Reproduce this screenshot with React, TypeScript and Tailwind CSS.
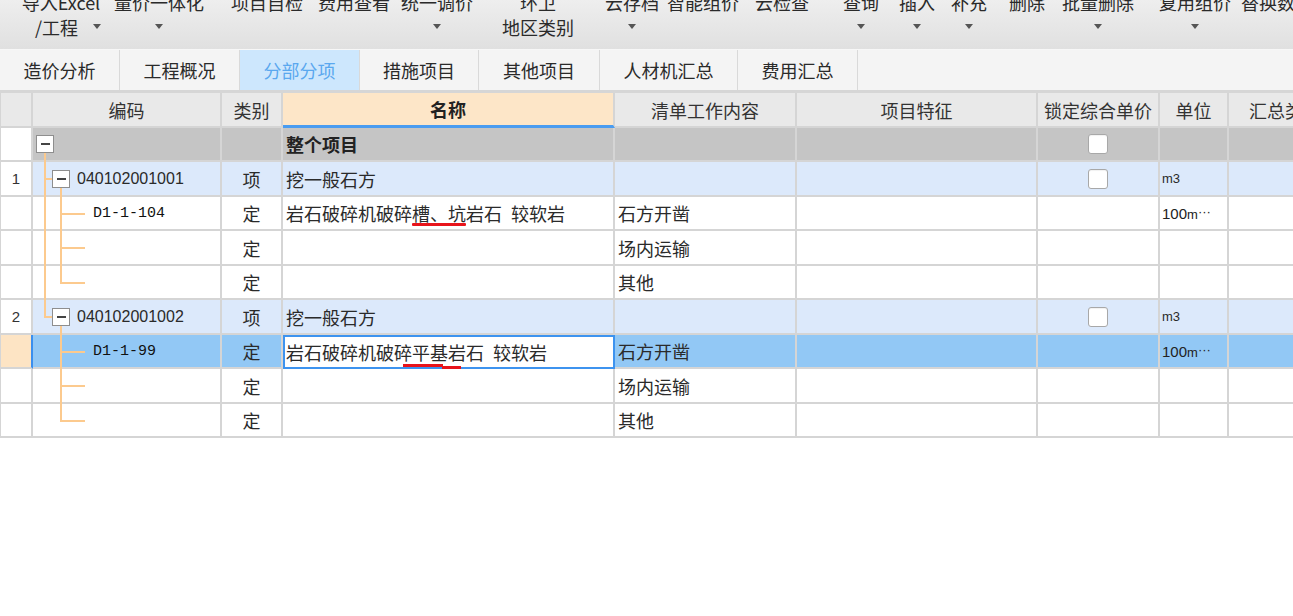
import React from "react";

const Arrow = () => (
  <span className="inline-block h-0 w-0 border-x-[4px] border-t-[5px] border-x-transparent border-t-[#555]" />
);

type TB = { l1: string; l2?: React.ReactNode; cls: string };

const toolbar: TB[] = [
  {
    l1: "导入Excel",
    l2: (
      <span className="flex w-full items-center pl-[14px]">
        <span>/工程</span>
        <span className="ml-[15px] flex">
          <Arrow />
        </span>
      </span>
    ),
    cls: "ml-[21px] w-[80px]",
  },
  { l1: "量价一体化", l2: <Arrow />, cls: "ml-[13px] w-[90px]" },
  { l1: "项目自检", cls: "ml-[27px] w-[72px]" },
  { l1: "费用查看", cls: "ml-[15px] w-[72px]" },
  { l1: "统一调价", l2: <Arrow />, cls: "ml-[11px] w-[72px]" },
  { l1: "环卫", l2: "地区类别", cls: "ml-[29px] w-[72px]" },
  { l1: "云存档", l2: <Arrow />, cls: "ml-[31px] w-[54px]" },
  { l1: "智能组价", cls: "ml-[8px] w-[72px]" },
  { l1: "云检查", cls: "ml-[16px] w-[54px]" },
  { l1: "查询", l2: <Arrow />, cls: "ml-[34px] w-[36px]" },
  { l1: "插入", l2: <Arrow />, cls: "ml-[20px] w-[36px]" },
  { l1: "补充", l2: <Arrow />, cls: "ml-[16px] w-[36px]" },
  { l1: "删除", cls: "ml-[22px] w-[36px]" },
  { l1: "批量删除", l2: <Arrow />, cls: "ml-[17px] w-[72px]" },
  { l1: "复用组价", l2: <Arrow />, cls: "ml-[25px] w-[72px]" },
  { l1: "替换数据", cls: "ml-[10px] w-[72px]" },
];

const tabs: { t: string; w: string; active?: boolean }[] = [
  { t: "造价分析", w: "w-[120px]" },
  { t: "工程概况", w: "w-[120px]" },
  { t: "分部分项", w: "w-[120px]", active: true },
  { t: "措施项目", w: "w-[119px]" },
  { t: "其他项目", w: "w-[121px]" },
  { t: "人材机汇总", w: "w-[138px]" },
  { t: "费用汇总", w: "w-[120px]" },
];

const W = [
  "w-[32px]",
  "w-[189px]",
  "w-[61px]",
  "w-[332px]",
  "w-[182px]",
  "w-[241px]",
  "w-[122px]",
  "w-[69px]",
  "w-[114px]",
];

const CELL =
  "relative shrink-0 h-full border-r-2 border-b-2 border-[#d5d5d5] flex items-center overflow-visible ";

const LINE = "absolute bg-[#fcca8e] ";

const Box = ({ cls }: { cls: string }) => (
  <span
    className={
      "absolute z-10 flex h-[18px] w-[18px] items-center justify-center border border-[#8e8e8e] bg-white " +
      cls
    }
  >
    <span className="h-[2px] w-[9px] bg-[#444]" />
  </span>
);

const Check = () => (
  <span className="block h-[20px] w-[20px] rounded-[3px] border border-[#a8a8a8] bg-white shadow-[inset_0_1px_1px_rgba(0,0,0,0.06)]" />
);

type Row = {
  kind: "root" | "qd" | "de";
  h: string;
  num?: string;
  code?: string;
  type?: string;
  name?: React.ReactNode;
  content?: string;
  unit?: React.ReactNode;
  lastQd?: boolean;
  lastDe?: boolean;
  underQd1?: boolean;
  selected?: boolean;
  underline?: React.ReactNode;
};

const Unit100 = () => (
  <span className="whitespace-nowrap font-['Liberation_Sans',sans-serif] text-[#222]">
    <span className="text-[15px]">100</span>
    <span className="text-[13px]">m</span>
    <span className="relative -top-[3px] text-[13px]">···</span>
  </span>
);

const rows: Row[] = [
  { kind: "root", h: "h-[34px]" },
  {
    kind: "qd",
    h: "h-[35px]",
    num: "1",
    code: "040102001001",
    type: "项",
    name: "挖一般石方",
    unit: <span className="font-['Liberation_Sans',sans-serif] text-[13px]">m3</span>,
  },
  {
    kind: "de",
    h: "h-[34px]",
    code: "D1-1-104",
    type: "定",
    underQd1: true,
    name: (
      <>
        岩石破碎机破碎槽、坑岩石<span className="ml-[9px]">较软岩</span>
      </>
    ),
    underline: (
      <span className="absolute left-[129px] top-[26px] z-10 h-[3px] w-[54px] rounded-[1px] bg-[#e8141b]" />
    ),
    content: "石方开凿",
    unit: <Unit100 />,
  },
  { kind: "de", h: "h-[35px]", type: "定", underQd1: true, content: "场内运输" },
  { kind: "de", h: "h-[34px]", type: "定", underQd1: true, lastDe: true, content: "其他" },
  {
    kind: "qd",
    h: "h-[35px]",
    num: "2",
    code: "040102001002",
    type: "项",
    name: "挖一般石方",
    lastQd: true,
    unit: <span className="font-['Liberation_Sans',sans-serif] text-[13px]">m3</span>,
  },
  {
    kind: "de",
    h: "h-[34px]",
    code: "D1-1-99",
    type: "定",
    selected: true,
    name: (
      <>
        岩石破碎机破碎平基岩石<span className="ml-[9px]">较软岩</span>
      </>
    ),
    underline: (
      <>
        <span className="absolute left-[118px] top-[27px] z-10 h-[3px] w-[40px] bg-[#e8141b]" />
        <span className="absolute left-[157px] top-[29px] z-10 h-[3px] w-[19px] bg-[#e8141b]" />
      </>
    ),
    content: "石方开凿",
    unit: <Unit100 />,
  },
  { kind: "de", h: "h-[35px]", type: "定", content: "场内运输" },
  { kind: "de", h: "h-[34px]", type: "定", lastDe: true, content: "其他" },
];

function CodeCell({ r, bg }: { r: Row; bg: string }) {
  if (r.kind === "root") {
    return (
      <div className={CELL + W[1] + " " + bg}>
        <Box cls="left-[3px] top-[7px]" />
        <span className={LINE + "left-[11px] top-[25px] bottom-[-2px] w-[2px]"} />
      </div>
    );
  }
  if (r.kind === "qd") {
    return (
      <div className={CELL + W[1] + " " + bg}>
        {r.lastQd ? (
          <span className={LINE + "left-[11px] top-0 h-[18px] w-[2px]"} />
        ) : (
          <span className={LINE + "left-[11px] top-0 bottom-[-2px] w-[2px]"} />
        )}
        <span className={LINE + "left-[11px] top-[16px] h-[2px] w-[9px]"} />
        <Box cls="left-[19px] top-[8px]" />
        <span className={LINE + "left-[27px] top-[26px] bottom-[-2px] w-[2px]"} />
        <span className="pl-[44px] font-['Liberation_Sans',sans-serif] text-[16px] text-[#2a2a2a]">
          {r.code}
        </span>
      </div>
    );
  }
  return (
    <div className={CELL + W[1] + " " + bg}>
      {r.underQd1 && <span className={LINE + "left-[11px] top-0 bottom-[-2px] w-[2px]"} />}
      {r.lastDe ? (
        <span className={LINE + "left-[27px] top-0 h-[18px] w-[2px]"} />
      ) : (
        <span className={LINE + "left-[27px] top-0 bottom-[-2px] w-[2px]"} />
      )}
      <span className={LINE + "left-[27px] top-[16px] h-[2px] w-[25px]"} />
      {r.code && (
        <span className="pl-[60px] font-['Liberation_Mono',monospace] text-[15px] text-[#111]">
          {r.code}
        </span>
      )}
    </div>
  );
}

function DataRow({ r }: { r: Row }) {
  const bg =
    r.kind === "root"
      ? "bg-[#c5c5c5]"
      : r.kind === "qd"
      ? "bg-[#dce9fb]"
      : r.selected
      ? "bg-[#92c8f5]"
      : "bg-white";
  const c0 = r.selected
    ? CELL + W[0] + " bg-[#fde4c4] border-r-[#3b8fee] justify-center"
    : CELL + W[0] + " bg-white justify-center";
  const nameCls = r.selected
    ? "relative shrink-0 h-full border-2 border-[#3d93ef] bg-white flex items-center pl-[1px] " + W[3]
    : CELL + W[3] + " pl-[3px] " + bg;
  return (
    <div className={"flex " + r.h}>
      <div className={c0}>
        {r.num && (
          <span className="font-['Liberation_Sans',sans-serif] text-[15px] text-[#333]">{r.num}</span>
        )}
      </div>
      <CodeCell r={r} bg={bg} />
      <div className={CELL + W[2] + " justify-center " + bg}>{r.type}</div>
      <div className={nameCls}>
        {r.kind === "root" ? (
          <span className="font-bold text-[#222]">整个项目</span>
        ) : (
          <span className="whitespace-nowrap">{r.name}</span>
        )}
        {r.underline}
      </div>
      <div className={CELL + W[4] + " pl-[3px] " + bg}>{r.content}</div>
      <div className={CELL + W[5] + " " + bg} />
      <div className={CELL + W[6] + " justify-center " + bg}>
        {(r.kind === "root" || r.kind === "qd") && <Check />}
      </div>
      <div className={CELL + W[7] + " pl-[2px] " + bg}>{r.unit}</div>
      <div className={CELL + W[8] + " " + bg} />
    </div>
  );
}

export default function App() {
  return (
    <div className="h-[616px] w-[1293px] overflow-hidden bg-white font-['Noto_Sans_CJK_SC',sans-serif] text-[18px] leading-none text-[#2a2a2a]">
      {/* toolbar */}
      <div className="h-[50px] overflow-hidden border-b border-[#f7f7f7] bg-linear-to-b from-[#eeeeee] to-[#e0e0e0]">
        <div className="-mt-[11px] flex whitespace-nowrap">
          {toolbar.map((it, i) => (
            <div key={i} className={"flex shrink-0 flex-col items-center " + it.cls}>
              <div className="flex h-[25px] items-center justify-center">{it.l1}</div>
              <div className="flex h-[25px] w-full items-center justify-center">{it.l2}</div>
            </div>
          ))}
        </div>
      </div>
      {/* tabs */}
      <div className="flex h-[40px] bg-[#f4f4f4]">
        {tabs.map((t) => (
          <div
            key={t.t}
            className={
              "flex h-full shrink-0 items-center justify-center border-r border-[#d9d9d9] " +
              t.w +
              (t.active ? " bg-[#cde7fd] text-[#5aa8ef]" : " text-[#2a2a2a]")
            }
          >
            {t.t}
          </div>
        ))}
      </div>
      <div className="h-[3px] bg-[#d6d6d6]" />
      {/* table */}
      <div className="w-[1400px] border-l border-[#d5d5d5]">
        <div className="flex h-[35px] text-[#333]">
          <div className={CELL + W[0] + " bg-[#e9e9e9]"} />
          <div className={CELL + W[1] + " justify-center bg-[#e9e9e9]"}>编码</div>
          <div className={CELL + W[2] + " justify-center bg-[#e9e9e9]"}>类别</div>
          <div className="relative flex h-full w-[332px] shrink-0 items-center justify-center border-r-2 border-b-[3px] border-r-[#d5d5d5] border-b-[#4a9cf0] bg-[#fde6c8] font-bold text-[#222]">
            名称
          </div>
          <div className={CELL + W[4] + " justify-center bg-[#e9e9e9]"}>清单工作内容</div>
          <div className={CELL + W[5] + " justify-center bg-[#e9e9e9]"}>项目特征</div>
          <div className={CELL + W[6] + " justify-center bg-[#e9e9e9]"}>锁定综合单价</div>
          <div className={CELL + W[7] + " justify-center bg-[#e9e9e9]"}>单位</div>
          <div className={CELL + W[8] + " justify-center bg-[#e9e9e9]"}>汇总类别</div>
        </div>
        {rows.map((r, i) => (
          <DataRow key={i} r={r} />
        ))}
      </div>
    </div>
  );
}
